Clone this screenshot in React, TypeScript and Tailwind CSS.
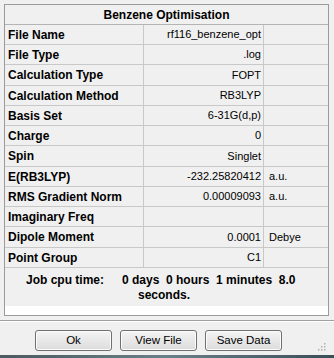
import React from "react";

const rows: [string, string, string][] = [
  ["File Name", "rf116_benzene_opt", ""],
  ["File Type", ".log", ""],
  ["Calculation Type", "FOPT", ""],
  ["Calculation Method", "RB3LYP", ""],
  ["Basis Set", "6-31G(d,p)", ""],
  ["Charge", "0", ""],
  ["Spin", "Singlet", ""],
  ["E(RB3LYP)", "-232.25820412", "a.u."],
  ["RMS Gradient Norm", "0.00009093", "a.u."],
  ["Imaginary Freq", "", ""],
  ["Dipole Moment", "0.0001", "Debye"],
  ["Point Group", "C1", ""],
];

function Btn({ label }: { label: string }) {
  return (
    <div className="w-[77px] h-[21px] rounded-[3px] border border-[#707070] bg-gradient-to-b from-[#f4f4f4] to-[#dcdcdc] flex items-center justify-center text-[11.5px] text-black shadow-[inset_0_0_0_1px_#fcfcfc]">
      {label}
    </div>
  );
}

export default function App() {
  return (
    <div
      className="w-[334px] h-[358px] bg-[#f0f0f0] relative overflow-hidden text-black"
      style={{ fontFamily: '"Liberation Sans", Arial, sans-serif' }}
    >
      <div className="pt-[4px] pl-[4px] pr-[5px]">
        <div className="h-[312px] border border-[#9a9a9a] bg-white flex flex-col">
          <div className="bg-[#f0f0f0]">
            <div className="h-[20px] border-b border-[#b4b4b4] flex items-center justify-center font-bold text-[12px]">
              Benzene Optimisation
            </div>
            {rows.map(([a, b, c], i) => (
              <div
                key={a}
                className={
                  (i % 4 === 2 ? "h-[21px] " : "h-[20px] ") +
                  "grid grid-cols-[139px_120px_1fr] border-b border-[#c8c8c8]"
                }
              >
                <div className="border-r border-[#c8c8c8] flex items-center pl-[3px] font-bold text-[12px]">
                  {a}
                </div>
                <div className="border-r border-[#c8c8c8] flex items-center justify-end pr-[2px] text-[11px]">
                  {b}
                </div>
                <div className="flex items-center pl-[5px] text-[11px]">{c}</div>
              </div>
            ))}
            <div className="h-[38px] flex pt-[5px] font-bold text-[12px] leading-[15px]">
              <div className="w-[117px] pl-[21px]">Job cpu time:</div>
              <div>
                <div className="whitespace-pre">0 days  0 hours  1 minutes  8.0</div>
                <div className="pl-[16px]">seconds.</div>
              </div>
            </div>
          </div>
          <div className="flex-1 bg-white" />
        </div>
      </div>
      <div className="mt-[4px] border-t border-[#a0a0a0] border-b border-b-white" />
      <div className="flex gap-[8px] pl-[35px] mt-[8px]">
        <Btn label="Ok" />
        <Btn label="View File" />
        <Btn label="Save Data" />
      </div>
      <div className="absolute right-[8px] bottom-[7px] w-[8px] h-[8px]">
        <svg width="8" height="8" viewBox="0 0 8 8">
          {[
            [6, 0],
            [6, 3],
            [3, 3],
            [6, 6],
            [3, 6],
            [0, 6],
          ].map(([x, y], i) => (
            <rect key={i} x={x} y={y} width="1.5" height="1.5" fill="#b0b0b0" />
          ))}
        </svg>
      </div>
      <div className="absolute left-0 right-0 bottom-0 h-[3px] bg-gradient-to-r from-[#4a5a60] via-[#6a8088] to-[#3a4e58]" />
    </div>
  );
}
